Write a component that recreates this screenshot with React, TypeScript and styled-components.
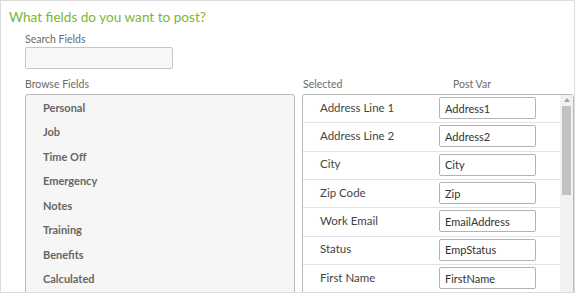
import React from "react";
import styled, { createGlobalStyle } from "styled-components";

const Global = createGlobalStyle`
  html, body { margin: 0; padding: 0; background: #fff; }
  body { font-family: Lato, "Open Sans", sans-serif; }
  * { box-sizing: border-box; }
`;

const Frame = styled.div`
  width: 575px;
  height: 293px;
  border: 1px solid #dcdcdc;
  overflow: hidden;
  padding: 8px 0 0 8px;
  display: flex;
  flex-direction: column;
`;

const Title = styled.h2`
  margin: 0;
  font-family: Lato, sans-serif;
  font-weight: 400;
  font-size: 13.6px;
  line-height: 17px;
  color: #7cb733;
`;

const Body = styled.div`
  padding: 6px 0 0 16px;
  display: flex;
  flex-direction: column;
`;

const Label = styled.div`
  font-size: 10.5px;
  line-height: 14px;
  color: #6b6b6b;
`;

const SearchInput = styled.div`
  width: 148px;
  height: 22px;
  margin-top: 1px;
  border: 1px solid #c6c6c6;
  border-radius: 2px;
  background: #f8f8f8;
`;

const Columns = styled.div`
  display: grid;
  grid-template-columns: 270px 272px;
  column-gap: 7px;
  margin-top: 8px;
`;

const Column = styled.div`
  display: flex;
  flex-direction: column;
  gap: 3px;
`;

const HeaderRow = styled.div`
  display: flex;
  padding-left: 1px;
`;

const HeaderCell = styled(Label)<{ $w?: number }>`
  width: ${(p) => (p.$w ? `${p.$w}px` : "auto")};
`;

const BrowseBox = styled.div`
  height: 220px;
  border: 1px solid #b9b9b9;
  border-radius: 3px;
  background: #f6f6f6;
  display: flex;
  flex-direction: column;
`;

const BrowseItem = styled.div`
  height: 24.5px;
  flex: none;
  display: flex;
  align-items: center;
  padding-left: 17px;
  font-size: 11px;
  font-weight: 700;
  color: #666;
`;

const SelectedBox = styled.div`
  height: 220px;
  border: 1px solid #b9b9b9;
  border-radius: 3px;
  background: #fff;
  display: flex;
`;

const Rows = styled.div`
  flex: 1;
  display: flex;
  flex-direction: column;
`;

const Row = styled.div`
  height: 28.33px;
  flex: none;
  display: flex;
  align-items: center;
  padding: 0 0 1px 17px;
  border-bottom: 1px solid #e2e2e2;
`;

const RowLabel = styled.div`
  width: 119px;
  font-size: 11.5px;
  color: #444;
  margin-top: -2px;
`;

const VarInput = styled.div`
  width: 97px;
  height: 22px;
  border: 1px solid #b3b3b3;
  border-radius: 2px;
  padding-left: 5px;
  display: flex;
  align-items: center;
  font-size: 11px;
  color: #333;
`;

const Scrollbar = styled.div`
  width: 13px;
  background: #f1f1f1;
  display: flex;
  flex-direction: column;
  align-items: center;
  padding-top: 3px;
`;

const Arrow = styled.div`
  width: 0;
  height: 0;
  border-left: 3px solid transparent;
  border-right: 3px solid transparent;
  border-bottom: 4px solid #a3a3a3;
`;

const Thumb = styled.div`
  width: 9px;
  height: 89px;
  margin-top: 4px;
  background: #c1c1c1;
`;

const browse = ["Personal", "Job", "Time Off", "Emergency", "Notes", "Training", "Benefits", "Calculated"];

const selected: [string, string][] = [
  ["Address Line 1", "Address1"],
  ["Address Line 2", "Address2"],
  ["City", "City"],
  ["Zip Code", "Zip"],
  ["Work Email", "EmailAddress"],
  ["Status", "EmpStatus"],
  ["First Name", "FirstName"],
];

export default function App() {
  return (
    <>
      <Global />
      <Frame>
        <Title>What fields do you want to post?</Title>
        <Body>
          <Label>Search Fields</Label>
          <SearchInput />
          <Columns>
            <Column>
              <Label>Browse Fields</Label>
              <BrowseBox>
                {browse.map((b) => (
                  <BrowseItem key={b}>{b}</BrowseItem>
                ))}
              </BrowseBox>
            </Column>
            <Column>
              <HeaderRow>
                <HeaderCell $w={150}>Selected</HeaderCell>
                <HeaderCell>Post Var</HeaderCell>
              </HeaderRow>
              <SelectedBox>
                <Rows>
                  {selected.map(([l, v]) => (
                    <Row key={l}>
                      <RowLabel>{l}</RowLabel>
                      <VarInput>{v}</VarInput>
                    </Row>
                  ))}
                </Rows>
                <Scrollbar>
                  <Arrow />
                  <Thumb />
                </Scrollbar>
              </SelectedBox>
            </Column>
          </Columns>
        </Body>
      </Frame>
    </>
  );
}
